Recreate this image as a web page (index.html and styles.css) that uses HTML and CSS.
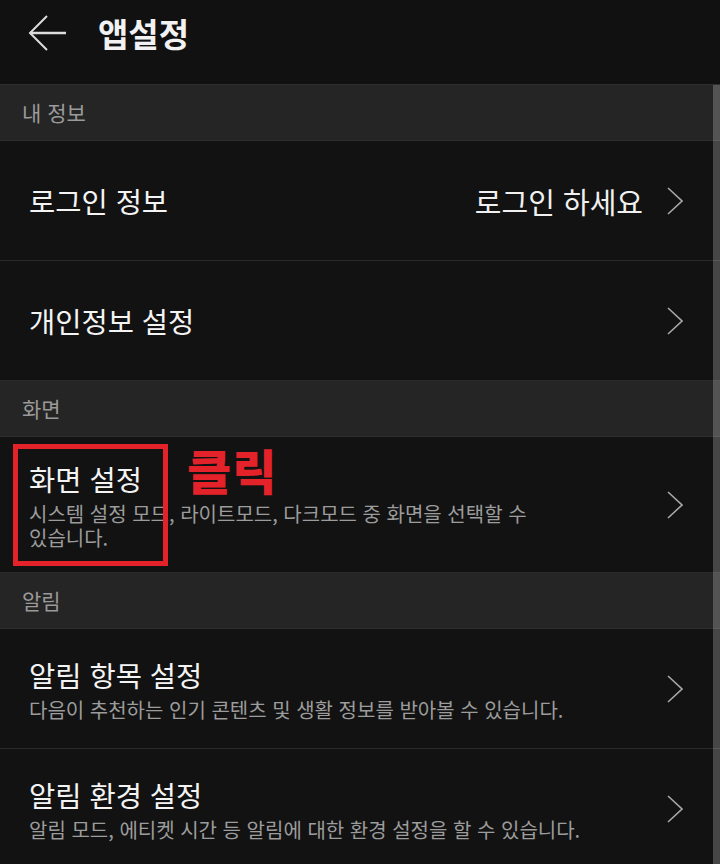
FILE: index.html
```html
<!DOCTYPE html>
<html lang="ko">
<head>
    <meta charset="UTF-8">
    <meta name="viewport" content="width=device-width, initial-scale=1.0">
    <title>앱설정</title>
    <link rel="stylesheet" href="styles.css">
</head>
<body>
    <div class="header">
        <svg class="back" width="40" height="38" viewBox="0 0 40 38">
            <polyline points="20,2 3,19 20,36" fill="none" stroke="#dcdcdc" stroke-width="2"/>
            <line x1="3" y1="19" x2="39" y2="19" stroke="#dcdcdc" stroke-width="2.4"/>
        </svg>
        <h1>앱설정</h1>
    </div>

    <div class="content">
        <div class="section">내 정보</div>
        <div class="row">
            <div class="text">
                <div class="title">로그인 정보</div>
            </div>
            <div class="value">로그인 하세요</div>
            <svg class="chev" width="16" height="28" viewBox="0 0 16 28"><polyline points="1,1 15,14 1,27" fill="none" stroke="#a8a8a8" stroke-width="1.6"/></svg>
        </div>
        <div class="row">
            <div class="text">
                <div class="title">개인정보 설정</div>
            </div>
            <svg class="chev" width="16" height="28" viewBox="0 0 16 28"><polyline points="1,1 15,14 1,27" fill="none" stroke="#a8a8a8" stroke-width="1.6"/></svg>
        </div>

        <div class="section">화면</div>
        <div class="row row-tall">
            <div class="text">
                <div class="title">화면 설정</div>
                <div class="sub">시스템 설정 모드, 라이트모드, 다크모드 중 화면을 선택할 수 있습니다.</div>
            </div>
            <svg class="chev" width="16" height="28" viewBox="0 0 16 28"><polyline points="1,1 15,14 1,27" fill="none" stroke="#a8a8a8" stroke-width="1.6"/></svg>
            <div class="mark"></div>
            <div class="click">클릭</div>
        </div>

        <div class="section">알림</div>
        <div class="row">
            <div class="text">
                <div class="title">알림 항목 설정</div>
                <div class="sub">다음이 추천하는 인기 콘텐츠 및 생활 정보를 받아볼 수 있습니다.</div>
            </div>
            <svg class="chev" width="16" height="28" viewBox="0 0 16 28"><polyline points="1,1 15,14 1,27" fill="none" stroke="#a8a8a8" stroke-width="1.6"/></svg>
        </div>
        <div class="row">
            <div class="text">
                <div class="title">알림 환경 설정</div>
                <div class="sub">알림 모드, 에티켓 시간 등 알림에 대한 환경 설정을 할 수 있습니다.</div>
            </div>
            <svg class="chev" width="16" height="28" viewBox="0 0 16 28"><polyline points="1,1 15,14 1,27" fill="none" stroke="#a8a8a8" stroke-width="1.6"/></svg>
        </div>

        <div class="scrollbar"></div>
    </div>
</body>
</html>
```

FILE: styles.css
```css
*{
    box-sizing: border-box;
    font-family: "Noto Sans CJK KR", "Noto Sans", sans-serif;
}
body{
    margin: 0;
    padding: 0;
    background-color: #121212;
    height: 864px;
    overflow: hidden;
}
.header{
    height: 85px;
    display: flex;
    align-items: center;
    padding: 0 0 18px 27px;
    background-color: #111111;
    border-bottom: 1px solid #2e2e2e;
}
.header .back{
    display: block;
}
.header h1{
    margin: 0 0 0 31px;
    font-size: 33px;
    font-weight: 700;
    color: #f2f2f2;
    line-height: 40px;
}
.content{
    position: relative;
}
.section{
    height: 56px;
    display: flex;
    align-items: center;
    padding: 0 22px 2px;
    background-color: #252525;
    border-bottom: 1px solid #2e2e2e;
    font-size: 21px;
    color: #9a9a9a;
}
.row{
    position: relative;
    min-height: 120px;
    display: flex;
    align-items: center;
    padding: 20px 37px 20px 29px;
    background-color: #121212;
    border-bottom: 1px solid #2a2a2a;
}
.row-tall{
    padding-top: 23px;
    padding-bottom: 22px;
}
.row .text{
    flex: 1;
    max-width: 568px;
}
.row .title{
    font-size: 28.5px;
    line-height: 38px;
    color: #f4f4f4;
}
.row .sub{
    margin-top: 4px;
    font-size: 20px;
    line-height: 24px;
    color: #9c9c9c;
    word-break: keep-all;
}
.row .value{
    font-size: 29px;
    color: #f0f0f0;
    margin-right: 24px;
}
.row .chev{
    margin-left: auto;
    flex-shrink: 0;
}
.mark{
    position: absolute;
    left: 13px;
    top: 7px;
    width: 155px;
    height: 122px;
    border: 5px solid #e3222a;
}
.click{
    position: absolute;
    left: 187px;
    top: 2px;
    font-size: 48px;
    line-height: 60px;
    font-weight: 900;
    color: #e3222a;
    letter-spacing: 1px;
}
.scrollbar{
    position: absolute;
    top: 0;
    right: 0;
    bottom: 0;
    width: 7px;
    background-color: rgba(255, 255, 255, 0.22);
}
```
